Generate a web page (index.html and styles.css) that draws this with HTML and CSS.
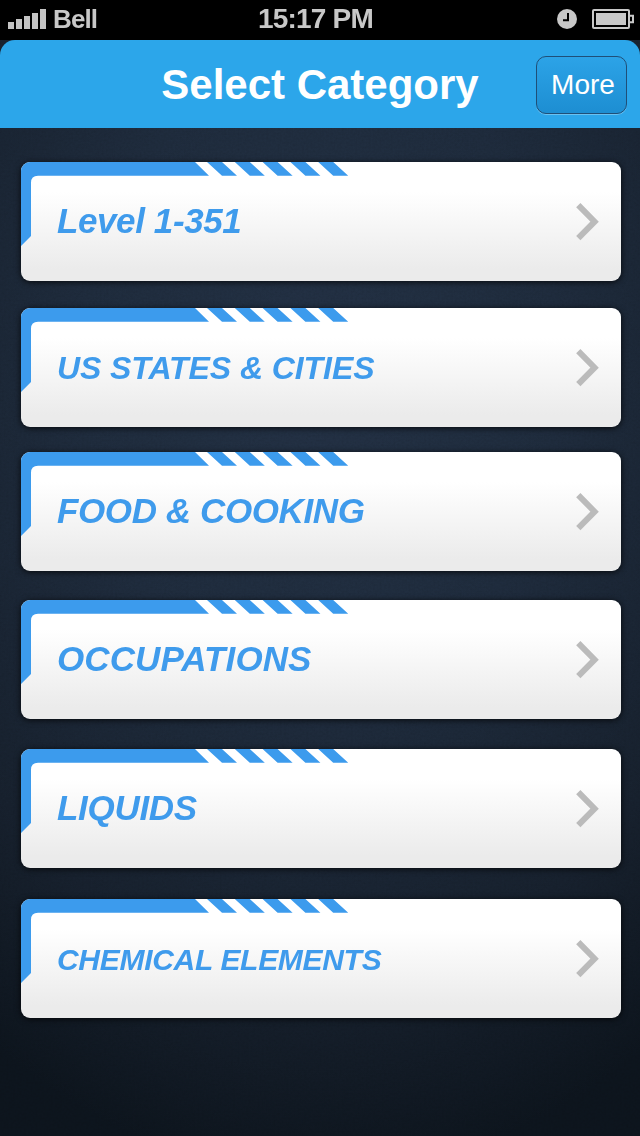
FILE: index.html
```html
<!DOCTYPE html>
<html lang="en">
<head>
    <meta charset="UTF-8">
    <meta name="viewport" content="width=640">
    <title>Select Category</title>
    <link rel="stylesheet" href="styles.css">
</head>
<body>
    <svg class="grain" width="640" height="1136">
        <filter id="grain">
            <feTurbulence type="fractalNoise" baseFrequency="0.45" numOctaves="2" seed="3"/>
            <feColorMatrix type="saturate" values="0"/>
            <feComponentTransfer><feFuncA type="linear" slope="0" intercept="1"/></feComponentTransfer>
        </filter>
        <rect width="640" height="1136" filter="url(#grain)"/>
    </svg>

    <!-- card decoration and arrow, reused by every category -->
    <svg class="defs" width="0" height="0">
        <symbol id="corner" viewBox="0 0 328 84">
            <path d="M0 0H174L188 13.7H17Q10 13.7 10 20.7V74L0 84Z"/>
            <path d="M186 0h15l15 13.7h-15zM213.8 0h15l15 13.7h-15zM241.6 0h15l15 13.7h-15zM269.4 0h15l15 13.7h-15zM297.2 0h15l15 13.7h-15z"/>
        </symbol>
        <symbol id="arrow" viewBox="0 0 24 38">
            <path d="M2.3 2.2L18.6 18.7L2.3 35.2" fill="none" stroke="#bbb" stroke-width="6"/>
        </symbol>
    </svg>

    <div class="status-bar">
        <div class="carrier">
            <svg width="38" height="20" fill="#c4c4c4">
                <path d="M0 13h6v7H0zM8 10h6v10H8zM16 7h6v13h-6zM24 4h6v16h-6zM32 0h6v20h-6z"/>
            </svg>
            <span>Bell</span>
        </div>
        <div class="time">15:17 PM</div>
        <div class="status-icons">
            <svg width="20" height="20">
                <circle cx="10" cy="10" r="10" fill="#c8c8c8"/>
                <path d="M11 4v7.2H6" fill="none" stroke="#000" stroke-width="2"/>
            </svg>
            <svg width="42" height="20">
                <rect x="1" y="1" width="36" height="18" rx="1" fill="none" stroke="#c8c8c8" stroke-width="2"/>
                <rect x="4" y="4" width="30" height="12" fill="#c8c8c8"/>
                <path d="M38 6.8h3v6.4h-3" fill="none" stroke="#c8c8c8" stroke-width="2"/>
            </svg>
        </div>
    </div>

    <div class="header">
        <h1>Select Category</h1>
        <button class="more">More</button>
    </div>

    <div class="categories">
        <div class="card level">
            <svg class="corner"><use href="#corner"/></svg>
            <span>Level 1-351</span>
            <svg class="arrow"><use href="#arrow"/></svg>
        </div>
        <div class="card states">
            <svg class="corner"><use href="#corner"/></svg>
            <span>US STATES &amp; CITIES</span>
            <svg class="arrow"><use href="#arrow"/></svg>
        </div>
        <div class="card food">
            <svg class="corner"><use href="#corner"/></svg>
            <span>FOOD &amp; COOKING</span>
            <svg class="arrow"><use href="#arrow"/></svg>
        </div>
        <div class="card occupations">
            <svg class="corner"><use href="#corner"/></svg>
            <span>OCCUPATIONS</span>
            <svg class="arrow"><use href="#arrow"/></svg>
        </div>
        <div class="card liquids">
            <svg class="corner"><use href="#corner"/></svg>
            <span>LIQUIDS</span>
            <svg class="arrow"><use href="#arrow"/></svg>
        </div>
        <div class="card elements">
            <svg class="corner"><use href="#corner"/></svg>
            <span>CHEMICAL ELEMENTS</span>
            <svg class="arrow"><use href="#arrow"/></svg>
        </div>
    </div>
</body>
</html>
```
FILE: styles.css
```css
* {
    box-sizing: border-box;
}
body {
    margin: 0;
    width: 640px;
    height: 1136px;
    overflow: hidden;
    position: relative;
    font-family: "Liberation Sans", Arial, sans-serif;
    background: radial-gradient(ellipse 600px 800px at 50% 33%, #202d3f 0%, #1c2838 40%, #151e2a 75%, #0c131b 100%);
}
.grain {
    position: absolute;
    top: 0;
    left: 0;
    opacity: 0.14;
    mix-blend-mode: overlay;
}
.defs {
    position: absolute;
}
.status-bar {
    position: relative;
    height: 40px;
    padding: 0 6px 2px 8px;
    background: #000;
    color: #c8c8c8;
    display: grid;
    grid-template-columns: 250px auto 1fr;
    align-items: center;
}
.carrier {
    display: flex;
    align-items: center;
    gap: 7px;
    font-size: 26px;
    font-weight: bold;
    letter-spacing: -0.9px;
}
.time {
    font-size: 28px;
    font-weight: bold;
    letter-spacing: -0.8px;
}
.status-icons {
    display: flex;
    justify-content: flex-end;
    gap: 15px;
}
.header {
    position: relative;
    height: 88px;
    padding: 2px 13px 0 0;
    background: #2ca6ea;
    border-radius: 15px 15px 0 0;
    display: grid;
    grid-template-columns: 104px 1fr 91px;
    align-items: center;
}
h1 {
    margin: 0;
    grid-column: 2;
    text-align: center;
    color: #fff;
    font-size: 42px;
    line-height: 48px;
}
.more {
    height: 58px;
    padding: 0 0 1px 3px;
    border: 1px solid #1f4f78;
    border-radius: 10px;
    background: linear-gradient(#2ca3e7, #1d8ed2);
    box-shadow: 0 1px 0 rgba(255, 255, 255, 0.3);
    color: #fff;
    font-family: inherit;
    font-size: 28px;
}
.categories {
    position: relative;
    padding: 34px 19px 0 21px;
}
.card {
    position: relative;
    height: 119px;
    padding: 0 21px 0 36px;
    border-radius: 9px;
    background: linear-gradient(#fff 0%, #fff 25%, #ebebeb 90%, #ebebeb 100%);
    box-shadow: 0 1px 6px rgba(0, 0, 0, 0.8);
    display: flex;
    align-items: center;
    justify-content: space-between;
    overflow: hidden;
    color: #3f9bec;
    font-size: 35px;
    font-weight: bold;
    font-style: italic;
    letter-spacing: -0.4px;
    white-space: nowrap;
}
.card span {
    padding-bottom: 2px;
}
.corner {
    position: absolute;
    top: 0;
    left: 0;
    width: 328px;
    height: 84px;
    fill: #3c9bed;
}
.arrow {
    width: 24px;
    height: 38px;
}
.states {
    margin-top: 27px;
    font-size: 32px;
    letter-spacing: -0.08px;
}
.food {
    margin-top: 25px;
}
.occupations {
    margin-top: 29px;
    letter-spacing: 0.1px;
}
.liquids {
    margin-top: 30px;
    letter-spacing: -0.3px;
}
.elements {
    margin-top: 31px;
    font-size: 30px;
    letter-spacing: -0.3px;
}
.card.states span, .card.elements span {
    padding: 2px 0 0;
}
```
